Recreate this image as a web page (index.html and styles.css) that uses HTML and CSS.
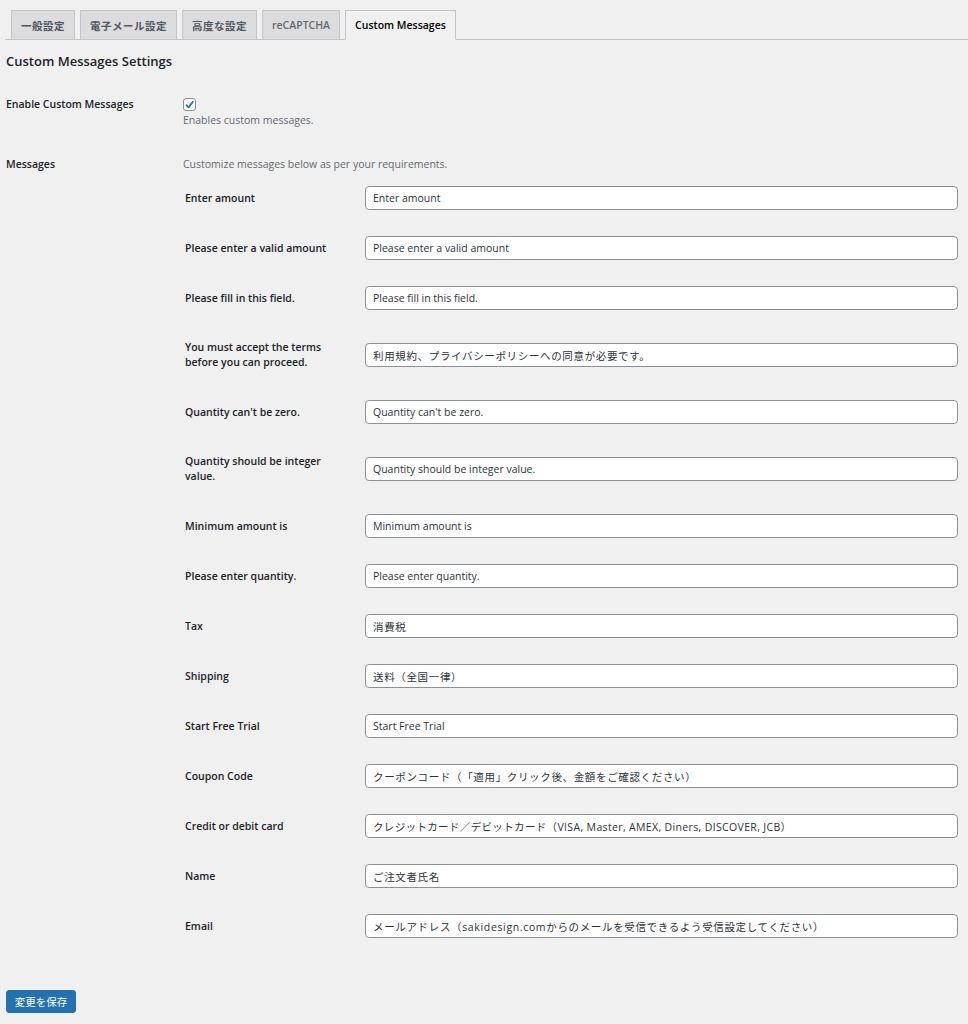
FILE: index.html
```html
<!DOCTYPE html>
<html lang="ja">
<head>
<meta charset="utf-8">
<title>Custom Messages</title>
<link rel="stylesheet" href="styles.css">
</head>
<body>
<div class="wrap">
  <nav class="tabs">
    <a class="tab tab-jp">一般設定</a>
    <a class="tab tab-jp">電子メール設定</a>
    <a class="tab tab-jp">高度な設定</a>
    <a class="tab tab-light">reCAPTCHA</a>
    <a class="tab tab-active">Custom Messages</a>
  </nav>

  <h2 class="title">Custom Messages Settings</h2>

  <div class="form">
    <div class="form-label form-label-enable">Enable Custom Messages</div>
    <div class="form-field">
      <span class="checkbox">
        <svg viewBox="0 0 12 12" width="12" height="12"><path d="M2.6 6.2 L5 8.6 L9.6 2.6" fill="none" stroke="#2271b1" stroke-width="1.9" stroke-linecap="round" stroke-linejoin="round"/></svg>
      </span>
      <p class="desc desc-enable">Enables custom messages.</p>
    </div>

    <div class="form-label form-label-messages">Messages</div>
    <div class="form-field">
      <p class="desc desc-messages">Customize messages below as per your requirements.</p>
      <div class="messages">
        <label class="msg-label">Enter amount</label>
        <input class="msg-input" type="text" value="Enter amount">
        <label class="msg-label">Please enter a valid amount</label>
        <input class="msg-input" type="text" value="Please enter a valid amount">
        <label class="msg-label">Please fill in this field.</label>
        <input class="msg-input" type="text" value="Please fill in this field.">
        <label class="msg-label">You must accept the terms before you can proceed.</label>
        <input class="msg-input msg-jp" type="text" value="利用規約、プライバシーポリシーへの同意が必要です。">
        <label class="msg-label">Quantity can't be zero.</label>
        <input class="msg-input" type="text" value="Quantity can't be zero.">
        <label class="msg-label">Quantity should be integer value.</label>
        <input class="msg-input" type="text" value="Quantity should be integer value.">
        <label class="msg-label">Minimum amount is</label>
        <input class="msg-input" type="text" value="Minimum amount is">
        <label class="msg-label">Please enter quantity.</label>
        <input class="msg-input" type="text" value="Please enter quantity.">
        <label class="msg-label">Tax</label>
        <input class="msg-input msg-jp" type="text" value="消費税">
        <label class="msg-label">Shipping</label>
        <input class="msg-input msg-jp" type="text" value="送料（全国一律）">
        <label class="msg-label">Start Free Trial</label>
        <input class="msg-input" type="text" value="Start Free Trial">
        <label class="msg-label">Coupon Code</label>
        <input class="msg-input msg-jp" type="text" value="クーポンコード（「適用」クリック後、金額をご確認ください）">
        <label class="msg-label">Credit or debit card</label>
        <input class="msg-input msg-mixed" type="text" value="クレジットカード／デビットカード（VISA, Master, AMEX, Diners, DISCOVER, JCB）">
        <label class="msg-label">Name</label>
        <input class="msg-input msg-jp" type="text" value="ご注文者氏名">
        <label class="msg-label">Email</label>
        <input class="msg-input msg-jp" type="text" value="メールアドレス（sakidesign.comからのメールを受信できるよう受信設定してください）">
      </div>
    </div>
  </div>

  <div class="submit">
    <button class="button-primary" type="button">変更を保存</button>
  </div>
</div>
</body>
</html>
```

FILE: styles.css
```css
html, body {
  margin: 0;
  padding: 0;
  background: #f0f0f1;
}

body {
  font-family: "Open Sans", "Noto Sans CJK JP", sans-serif;
  font-size: 10.5px;
  color: #1d2327;
  text-spacing-trim: space-all;
}

.wrap {
  padding: 10px 10px 0 5px;
}

.tabs {
  display: flex;
  gap: 5px;
  padding-left: 6px;
  border-bottom: 1px solid #c3c4c7;
  margin-right: -10px;
}

.tab {
  display: flex;
  align-items: center;
  height: 29px;
  padding: 0 9px;
  margin-bottom: -1px;
  background: #dcdcde;
  border: 1px solid #c3c4c7;
  border-bottom: none;
  box-sizing: border-box;
  font-weight: 600;
  font-size: 10.5px;
  color: #50575e;
}

.tab-jp {
  letter-spacing: 0.5px;
}

.tab-light {
  color: #646970;
}

.tab-active {
  background: #f0f0f1;
  color: #000;
  border-bottom: 1px solid #f0f0f1;
  height: 30px;
}

.title {
  margin: 12px 0 0 1px;
  font-size: 13px;
  font-weight: 600;
  line-height: 18px;
  color: #1d2327;
}

.form {
  display: grid;
  grid-template-columns: 177px 1fr;
  margin: 2px 0 0 1px;
}

.form-label {
  font-weight: 600;
  line-height: 15px;
  color: #1d2327;
}

.form-label-enable {
  padding-top: 25px;
}

.form-label-messages {
  padding-top: 29px;
}

.form-field {
  min-width: 0;
}

.checkbox {
  display: flex;
  align-items: center;
  justify-content: center;
  width: 13px;
  height: 13px;
  margin-top: 26px;
  background: #fff;
  border: 1px solid #8c8f94;
  border-radius: 3px;
  box-sizing: border-box;
}

.desc {
  margin: 0;
  color: #646970;
  line-height: 15px;
}

.desc-enable {
  margin-top: 2px;
}

.desc-messages {
  margin-top: 29px;
}

.messages {
  display: grid;
  grid-template-columns: 180px 1fr;
  row-gap: 26px;
  margin-top: 14px;
  margin-left: 2px;
}

.msg-label {
  align-self: center;
  padding: 4px 32px 4px 0;
  font-weight: 600;
  line-height: 15px;
  color: #1d2327;
}

.msg-input {
  align-self: center;
  height: 24px;
  box-sizing: border-box;
  width: 100%;
  margin: 0;
  padding: 0 7px;
  border: 1px solid #8c8f94;
  border-radius: 4px;
  background: #fff;
  font-family: "Open Sans", "Noto Sans CJK JP", sans-serif;
  font-size: 10.5px;
  color: #2c3338;
  text-spacing-trim: space-all;
}

.msg-jp {
  letter-spacing: 0.65px;
}

.msg-mixed {
  letter-spacing: 0.35px;
}

.submit {
  padding-top: 52px;
  padding-left: 1px;
}

.button-primary {
  height: 23px;
  width: 70px;
  padding: 0;
  background: #2271b1;
  border: 1px solid #2271b1;
  border-radius: 3px;
  color: #fff;
  font-family: "Open Sans", "Noto Sans CJK JP", sans-serif;
  font-size: 10.5px;
}
```
